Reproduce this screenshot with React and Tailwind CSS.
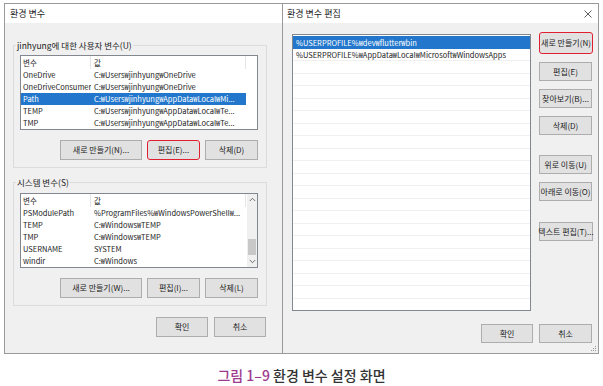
import React from "react";

const Btn = ({ children, className = "" }) => (
  <div
    className={`flex items-center justify-center bg-[#e1e1e1] border border-[#adadad] text-[8px] text-[#222] whitespace-nowrap overflow-visible ${className}`}
  >
    {children}
  </div>
);

const Chevron = ({ up }) => (
  <svg width="7" height="5" viewBox="0 0 7 5">
    <path
      d={up ? "M0.8 4 L3.5 1.3 L6.2 4" : "M0.8 1 L3.5 3.7 L6.2 1"}
      fill="none"
      stroke="#606060"
      strokeWidth="0.9"
    />
  </svg>
);

const Row = ({ name, value, selected }) => (
  <div
    className={`flex h-[12px] items-center w-[225px] ${selected ? "bg-[#2277cc] text-white" : "text-[#1a1a1a]"}`}
  >
    <div className="w-[70px] pl-[2px] whitespace-nowrap overflow-hidden">{name}</div>
    <div className="w-[155px] pl-[3px] whitespace-nowrap overflow-hidden">{value}</div>
  </div>
);

const Header = () => (
  <div className="flex h-[13px] items-center text-[#1a1a1a] w-[225px]">
    <div className="w-[70px] pl-[2px] h-full flex items-center border-r border-[#e5e5e5]">변수</div>
    <div className="w-[155px] pl-[3px] h-full flex items-center border-r border-[#e5e5e5]">값</div>
  </div>
);

const GroupLabel = ({ children }) => (
  <div className="-mt-[7px] ml-[2px] w-fit bg-[#f0f0f0] px-[1px] text-[8.5px] leading-[13px] text-[#1a1a1a]">
    {children}
  </div>
);

function LeftWindow() {
  return (
    <div className="w-[278px] h-[351px] border border-r-0 border-[#9a9a9a] flex flex-col bg-[#f0f0f0]">
      <div className="h-[19px] bg-white flex items-center pl-[5px] text-[9px] text-[#1a1a1a]">환경 변수</div>
      <div className="flex flex-col">
        {/* group 1 */}
        <div className="mt-[22px] ml-[8px] w-[254px] border border-[#dcdcdc]">
          <GroupLabel>jinhyung에 대한 사용자 변수(U)</GroupLabel>
          <div className="pl-[6px]">
            <div className="mt-[3px] w-[238px] border border-[#828790] bg-white text-[7.5px]">
              <Header />
              <Row name="OneDrive" value="C:₩Users₩jinhyung₩OneDrive" />
              <Row name="OneDriveConsumer" value="C:₩Users₩jinhyung₩OneDrive" />
              <Row name="Path" value="C:₩Users₩jinhyung₩AppData₩Local₩Mi..." selected />
              <Row name="TEMP" value="C:₩Users₩jinhyung₩AppData₩Local₩Te..." />
              <Row name="TMP" value="C:₩Users₩jinhyung₩AppData₩Local₩Te..." />
            </div>
          </div>
          <div className="mt-[10px] mb-[7px] flex justify-end gap-[5px] pr-[8px]">
            <Btn className="w-[82px] h-[20px]">새로 만들기(N)...</Btn>
            <Btn className="w-[53px] h-[20px] border-[1.5px] border-[#e02030] rounded-[3px]">편집(E)...</Btn>
            <Btn className="w-[53px] h-[20px]">삭제(D)</Btn>
          </div>
        </div>
        {/* group 2 */}
        <div className="mt-[14px] ml-[8px] w-[254px] border border-[#dcdcdc]">
          <GroupLabel>시스템 변수(S)</GroupLabel>
          <div className="pl-[6px]">
            <div className="mt-[4px] w-[238px] border border-[#828790] bg-white text-[7.5px] flex">
              <div className="flex flex-col">
                <Header />
                <Row name="PSModulePath" value="%ProgramFiles%₩WindowsPowerShell₩..." />
                <Row name="TEMP" value="C:₩Windows₩TEMP" />
                <Row name="TMP" value="C:₩Windows₩TEMP" />
                <Row name="USERNAME" value="SYSTEM" />
                <Row name="windir" value="C:₩Windows" />
              </div>
              <div className="w-[11px] bg-[#f0f0f0] flex flex-col items-center ml-[1px]">
                <div className="h-[11px] flex items-center justify-center"><Chevron up /></div>
                <div className="flex-1 flex flex-col justify-end w-full px-[1px]">
                  <div className="h-[16px] bg-[#c8c8c8] mb-[1px]" />
                </div>
                <div className="h-[11px] flex items-center justify-center"><Chevron /></div>
              </div>
            </div>
          </div>
          <div className="mt-[10px] mb-[7px] flex justify-end gap-[5px] pr-[8px]">
            <Btn className="w-[82px] h-[20px]">새로 만들기(W)...</Btn>
            <Btn className="w-[53px] h-[20px]">편집(I)...</Btn>
            <Btn className="w-[53px] h-[20px]">삭제(L)</Btn>
          </div>
        </div>
        <div className="mt-[11px] flex justify-end gap-[6px] pr-[16px]">
          <Btn className="w-[52px] h-[20px] border-[#0078d7]">확인</Btn>
          <Btn className="w-[52px] h-[20px]">취소</Btn>
        </div>
      </div>
    </div>
  );
}

const paths = [
  "%USERPROFILE%₩dev₩flutter₩bin",
  "%USERPROFILE%₩AppData₩Local₩Microsoft₩WindowsApps",
];

function RightWindow() {
  const rows = Array.from({ length: 22 }, (_, i) => paths[i] || "");
  return (
    <div className="w-[317px] h-[351px] border border-[#9a9a9a] flex flex-col bg-[#f0f0f0]">
      <div className="h-[19px] bg-white flex items-center justify-between pl-[4px] pr-[6px] text-[9px] text-[#1a1a1a]">
        <span>환경 변수 편집</span>
        <svg width="8" height="8" viewBox="0 0 8 8">
          <path d="M0.5 0.5 L7.5 7.5 M7.5 0.5 L0.5 7.5" stroke="#333" strokeWidth="0.8" />
        </svg>
      </div>
      <div className="flex pt-[9px] pl-[9px]">
        <div className="mt-[2px] w-[239px] h-[277px] border border-[#828790] bg-white overflow-hidden pt-[1px] text-[7.5px]">
          {rows.map((t, i) => (
            <div
              key={i}
              className={`h-[12.5px] flex items-center pl-[3px] whitespace-nowrap ${i === 0 ? "bg-[#2277cc] text-white" : "text-[#1a1a1a] border-b border-[#f0f0f0]"}`}
            >
              {t}
            </div>
          ))}
        </div>
        <div className="ml-[8px] flex flex-col">
          <Btn className="w-[54px] h-[22px] border-[1.5px] border-[#e02030] rounded-[3px]">새로 만들기(N)</Btn>
          <Btn className="mt-[8px] w-[53px] h-[19px]">편집(E)</Btn>
          <Btn className="mt-[8px] w-[53px] h-[19px]">찾아보기(B)...</Btn>
          <Btn className="mt-[8px] w-[53px] h-[19px]">삭제(D)</Btn>
          <Btn className="mt-[20px] w-[53px] h-[19px]">위로 이동(U)</Btn>
          <Btn className="mt-[8px] w-[53px] h-[19px]">아래로 이동(O)</Btn>
          <Btn className="mt-[21px] w-[54px] h-[19px]">텍스트 편집(T)...</Btn>
        </div>
      </div>
      <div className="mt-[13px] flex justify-end gap-[6px] pr-[6px]">
        <Btn className="w-[52px] h-[19px] border-[#0078d7]">확인</Btn>
        <Btn className="w-[53px] h-[19px]">취소</Btn>
      </div>
      <div className="flex-1 flex justify-end items-end pr-[1px] pb-[1px]">
        <svg width="6" height="6" viewBox="0 0 6 6">
          <rect x="4" y="0" width="1" height="1" fill="#999" />
          <rect x="2" y="2" width="1" height="1" fill="#999" />
          <rect x="4" y="2" width="1" height="1" fill="#999" />
          <rect x="0" y="4" width="1" height="1" fill="#999" />
          <rect x="2" y="4" width="1" height="1" fill="#999" />
          <rect x="4" y="4" width="1" height="1" fill="#999" />
        </svg>
      </div>
    </div>
  );
}

export default function App() {
  return (
    <div className="w-[603px] h-[386px] bg-white overflow-hidden font-['Noto_Sans_CJK_KR','Noto_Sans',sans-serif]">
      <div className="flex pt-[3px] pl-[4px]">
        <LeftWindow />
        <RightWindow />
      </div>
      <div className="mt-[13px] text-center text-[14px] leading-[17px] font-medium text-[#333]">
        <span className="text-[#9d3a8e]">그림 1–9</span> 환경 변수 설정 화면
      </div>
    </div>
  );
}
